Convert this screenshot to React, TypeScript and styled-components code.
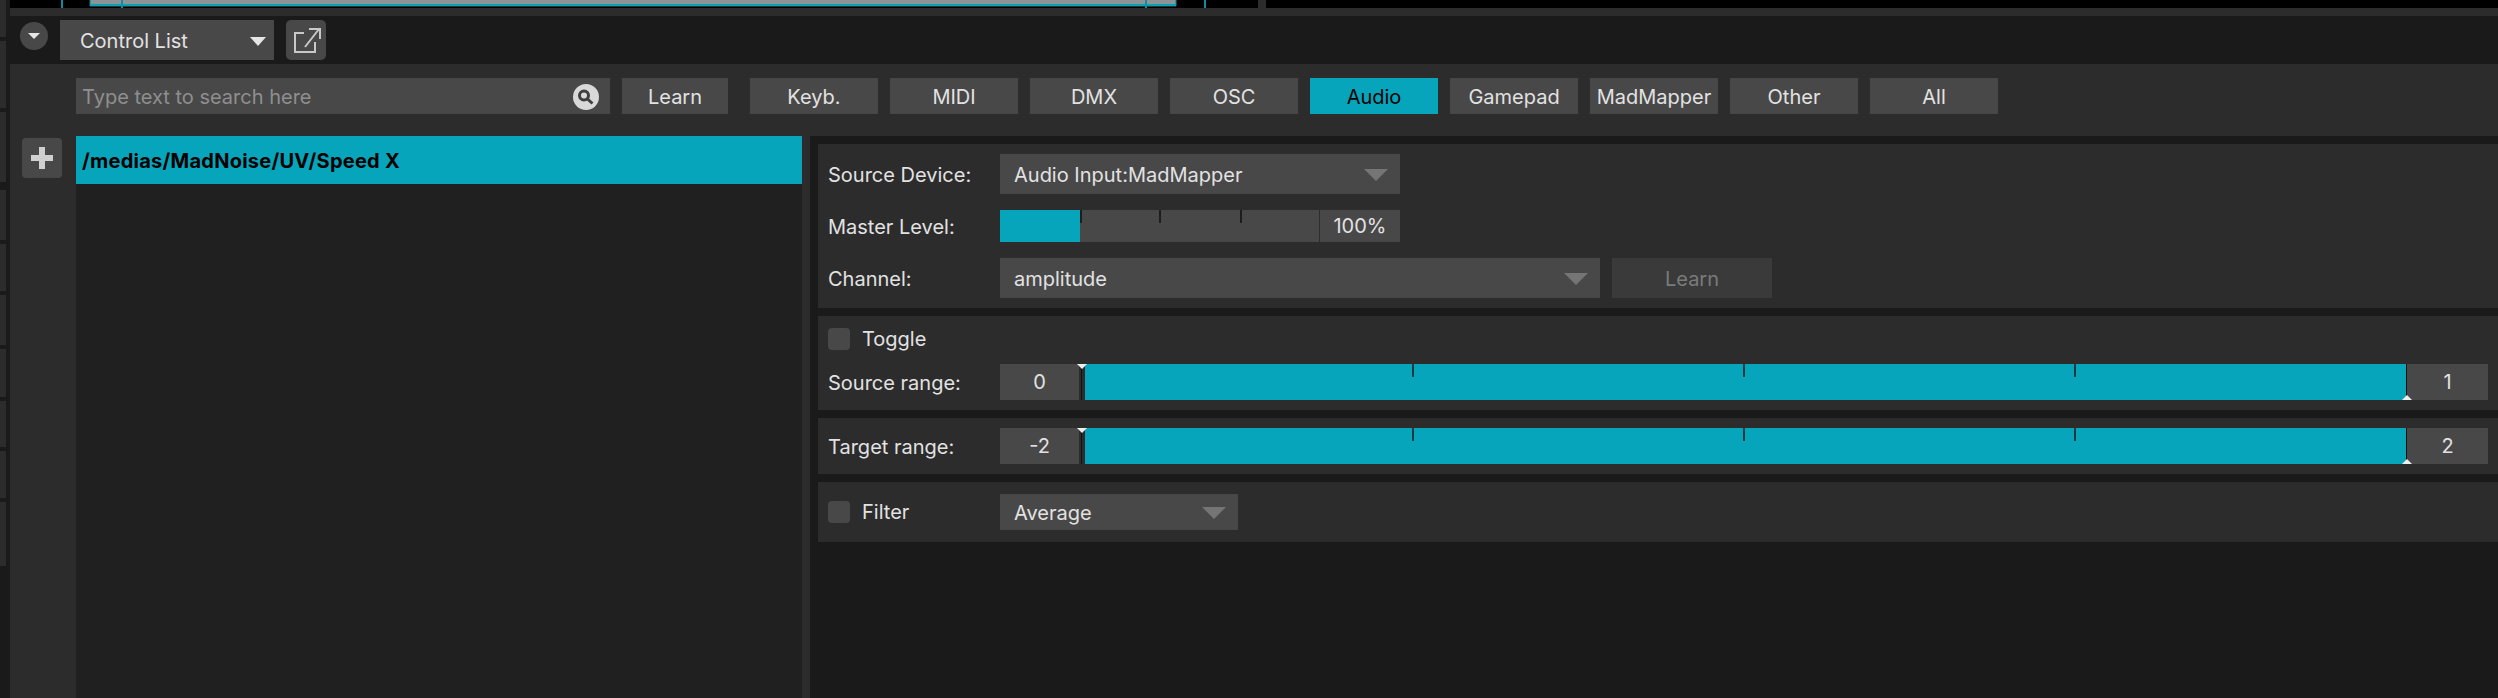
import React from 'react';
import styled, { createGlobalStyle } from 'styled-components';

const CYAN = '#07a5bc';
const PANEL = '#2c2c2c';
const DARK = '#1a1a1a';
const CONTROL = '#484848';
const TEXT = '#e2e2e2';

const GlobalStyle = createGlobalStyle`
  html, body {
    margin: 0;
    padding: 0;
    height: 100%;
    background: ${DARK};
    overflow: hidden;
  }
  #root {
    height: 100%;
  }
  * {
    box-sizing: border-box;
  }
`;

const Page = styled.div`
  display: flex;
  width: 2498px;
  height: 698px;
  font-family: Inter, 'Liberation Sans', sans-serif;
  font-size: 20px;
  color: ${TEXT};
  background: ${DARK};
`;

/* thin strip of the neighbouring panel, on the left edge */
const Rail = styled.div`
  width: 10px;
  flex-shrink: 0;
  display: flex;
  flex-direction: column;
  gap: 4px;
  padding-right: 4px;
`;

const RailCell = styled.div<{ $h: number; $gapAfter?: number }>`
  height: ${p => p.$h}px;
  margin-bottom: ${p => p.$gapAfter || 0}px;
  background: ${PANEL};
`;

const Main = styled.div`
  flex: 1;
  min-width: 0;
  display: flex;
  flex-direction: column;
`;

const Timeline = styled.div`
  position: relative;
  height: 8px;
  background: #000;
  overflow: hidden;
`;

const TimelineTick = styled.div<{ $x: number }>`
  position: absolute;
  top: 0;
  left: ${p => p.$x}px;
  width: 2px;
  height: 8px;
  background: #0b8ea3;
`;

const TimelineClip = styled.div`
  position: absolute;
  top: 0;
  left: 80px;
  width: 1086px;
  height: 6px;
  background: #8d9496;
  border: solid #0aa0b6;
  border-width: 0 1px 2px 1px;
  box-shadow: 0 1px 0 #24383c, 1px 0 0 #24383c, -1px 0 0 #24383c;
`;

const TimelineSplit = styled.div`
  position: absolute;
  top: 0;
  left: 1248px;
  width: 8px;
  height: 8px;
  background: ${PANEL};
`;

const Band = styled.div`
  height: 8px;
  background: ${PANEL};
`;

const Header = styled.div`
  height: 48px;
  display: flex;
  align-items: center;
  padding: 0 0 0 10px;
  background: ${DARK};
`;

const CollapseButton = styled.div`
  width: 28px;
  height: 28px;
  border-radius: 50%;
  background: ${CONTROL};
  display: flex;
  align-items: center;
  justify-content: center;
  margin-right: 12px;
  margin-top: -8px;
`;

const Arrow = styled.span<{ $w: number; $h: number; $color: string }>`
  display: block;
  flex-shrink: 0;
  width: 0;
  height: 0;
  border-left: ${p => p.$w / 2}px solid transparent;
  border-right: ${p => p.$w / 2}px solid transparent;
  border-top: ${p => p.$h}px solid ${p => p.$color};
`;

const Select = styled.div<{ $w: number; $h?: number; $pad?: number; $arrowRight?: number }>`
  width: ${p => p.$w}px;
  height: ${p => p.$h || 40}px;
  flex-shrink: 0;
  display: flex;
  align-items: center;
  justify-content: space-between;
  padding: 2px ${p => p.$arrowRight ?? 12}px 0 ${p => p.$pad ?? 14}px;
  background: ${CONTROL};
`;

const IconButton = styled.div`
  width: 40px;
  height: 40px;
  margin-left: 12px;
  border-radius: 5px;
  background: ${CONTROL};
  display: flex;
`;

const Body = styled.div`
  flex: 1;
  min-height: 0;
  display: flex;
  flex-direction: column;
  background: ${PANEL};
`;

const Toolbar = styled.div`
  height: 72px;
  flex-shrink: 0;
  display: flex;
  padding: 14px 0 0 66px;
`;

const Search = styled.div`
  width: 534px;
  height: 36px;
  display: flex;
  align-items: center;
  justify-content: space-between;
  padding: 2px 11px 0 6px;
  background: ${CONTROL};
  color: #8f8f8f;
`;

const SearchBadge = styled.div`
  width: 26px;
  height: 26px;
  border-radius: 50%;
  background: #d9d9d9;
  display: flex;
`;

const Button = styled.div<{ $active?: boolean; $w?: number }>`
  width: ${p => p.$w || 128}px;
  height: 36px;
  flex-shrink: 0;
  display: flex;
  align-items: center;
  justify-content: center;
  padding-top: 2px;
  background: ${p => (p.$active ? CYAN : CONTROL)};
  color: ${p => (p.$active ? '#000' : TEXT)};
`;

const LearnButton = styled(Button)`
  margin: 0 22px 0 12px;
`;

const Filters = styled.div`
  display: flex;
  gap: 12px;
`;

const Content = styled.div`
  flex: 1;
  min-height: 0;
  display: flex;
`;

const Gutter = styled.div`
  width: 66px;
  flex-shrink: 0;
  padding: 2px 0 0 12px;
`;

const AddButton = styled.div`
  width: 40px;
  height: 40px;
  border-radius: 4px;
  background: ${CONTROL};
  display: flex;
`;

const List = styled.div`
  width: 726px;
  flex-shrink: 0;
  background: #202020;
`;

const ListRow = styled.div`
  height: 48px;
  display: flex;
  align-items: center;
  padding: 2px 0 0 6px;
  background: ${CYAN};
  color: #000;
  font-weight: 700;
  letter-spacing: 0.25px;
`;

const Details = styled.div`
  flex: 1;
  min-width: 0;
  margin-left: 8px;
  padding: 8px 0 0 8px;
  display: flex;
  flex-direction: column;
  gap: 8px;
  background: ${DARK};
`;

const Section = styled.div<{ $h: number }>`
  height: ${p => p.$h}px;
  flex-shrink: 0;
  display: flex;
  flex-direction: column;
  padding: 0 10px;
  background: ${PANEL};
`;

const Row = styled.div<{ $top?: number }>`
  display: flex;
  align-items: center;
  margin-top: ${p => p.$top || 0}px;
`;

const Label = styled.div`
  width: 172px;
  flex-shrink: 0;
  padding-top: 2px;
`;

const MuteLearn = styled(Button)`
  width: 160px;
  height: 40px;
  margin-left: 12px;
  background: #3a3a3a;
  color: #7b7b7b;
`;

const Level = styled.div`
  position: relative;
  width: 400px;
  height: 32px;
  display: flex;
  background: ${CONTROL};
`;

const LevelFill = styled.div`
  width: 80px;
  background: ${CYAN};
`;

const LevelTick = styled.div<{ $x: number }>`
  position: absolute;
  top: 0;
  left: ${p => p.$x}px;
  width: 2px;
  height: 13px;
  background: #1d1d1d;
`;

const LevelValue = styled.div`
  margin-left: auto;
  width: 81px;
  display: flex;
  align-items: center;
  justify-content: center;
  border-left: 1px solid #2e2e2e;
`;

const Check = styled.div`
  width: 22px;
  height: 22px;
  flex-shrink: 0;
  margin-right: 12px;
  border-radius: 4px;
  background: ${CONTROL};
`;

const CheckLabel = styled.div`
  width: 138px;
  flex-shrink: 0;
`;

const RangeRow = styled.div`
  display: flex;
  height: 36px;
  width: 1488px;
`;

const ValueBox = styled.div<{ $w: number }>`
  width: ${p => p.$w}px;
  flex-shrink: 0;
  display: flex;
  align-items: center;
  justify-content: center;
  background: ${CONTROL};
`;

const Track = styled.div`
  position: relative;
  flex: 1;
  display: flex;
  padding: 0 1px 0 6px;
`;

const TrackFill = styled.div`
  flex: 1;
  background: ${CYAN};
`;

const TrackLine = styled.div<{ $end?: boolean }>`
  position: absolute;
  top: 0;
  bottom: 0;
  width: 1px;
  background: #111;
  ${p => (p.$end ? 'right: 0;' : 'left: 2px;')}
`;

const TrackTick = styled.div<{ $x: number }>`
  position: absolute;
  top: 0;
  left: ${p => p.$x}px;
  width: 2px;
  height: 13px;
  background: #1b3a40;
`;

const Handle = styled.div<{ $end?: boolean }>`
  position: absolute;
  width: 0;
  height: 0;
  border-left: 5px solid transparent;
  border-right: 5px solid transparent;
  ${p =>
    p.$end
      ? `right: -5px; bottom: 0; border-bottom: 5px solid #eee;`
      : `left: -2px; top: 0; border-top: 5px solid #eee;`}
`;

const Range = ({ low, high }: { low: string; high: string }) => (
  <RangeRow>
    <ValueBox $w={79}>{low}</ValueBox>
    <Track>
      <TrackFill />
      <TrackLine />
      <TrackLine $end />
      <TrackTick $x={333} />
      <TrackTick $x={664} />
      <TrackTick $x={995} />
      <Handle />
      <Handle $end />
    </Track>
    <ValueBox $w={81}>{high}</ValueBox>
  </RangeRow>
);

const filters = ['Keyb.', 'MIDI', 'DMX', 'OSC', 'Audio', 'Gamepad', 'MadMapper', 'Other', 'All'];

const railCells = [37, 67, 70, 50, 47, 50, 48, 46, 47, 64];

export default function App() {
  return (
    <Page>
      <GlobalStyle />
      <Rail>
        {railCells.map((h, i) => (
          <RailCell key={i} $h={h} $gapAfter={i === 2 ? 4 : 0} />
        ))}
      </Rail>
      <Main>
        <Timeline>
          <TimelineTick $x={51} />
          <TimelineClip />
          <TimelineTick $x={111} />
          <TimelineTick $x={1135} />
          <TimelineTick $x={1194} />
          <TimelineSplit />
        </Timeline>
        <Band />
        <Header>
          <CollapseButton>
            <Arrow $w={12} $h={6} $color="#e6e6e6" />
          </CollapseButton>
          <Select $w={214} $pad={20} $arrowRight={8}>
            Control List
            <Arrow $w={17} $h={9} $color="#e6e6e6" />
          </Select>
          <IconButton>
            <svg width="40" height="40" viewBox="0 0 40 40" fill="none" stroke="#c8c8c8" strokeWidth="2">
              <path d="M18 13H9V32H29V22" />
              <path d="M19 27L33 9M23 9H34V19" />
            </svg>
          </IconButton>
        </Header>
        <Body>
          <Toolbar>
            <Search>
              Type text to search here
              <SearchBadge>
                <svg width="26" height="26" viewBox="0 0 26 26" fill="none" stroke="#3f3f3f" strokeWidth="3">
                  <circle cx="11" cy="11.5" r="4.5" />
                  <path d="M14.5 15L19.5 19.5" />
                </svg>
              </SearchBadge>
            </Search>
            <LearnButton $w={106}>Learn</LearnButton>
            <Filters>
              {filters.map(name => (
                <Button key={name} $active={name === 'Audio'}>
                  {name}
                </Button>
              ))}
            </Filters>
          </Toolbar>
          <Content>
            <Gutter>
              <AddButton>
                <svg width="40" height="40" viewBox="0 0 40 40" fill="#cfcfcf">
                  <rect x="9" y="17" width="22" height="6" />
                  <rect x="17" y="9" width="6" height="22" />
                </svg>
              </AddButton>
            </Gutter>
            <List>
              <ListRow>/medias/MadNoise/UV/Speed X</ListRow>
            </List>
            <Details>
              <Section $h={164}>
                <Row $top={10}>
                  <Label>Source Device:</Label>
                  <Select $w={400}>
                    Audio Input:MadMapper
                    <Arrow $w={24} $h={12} $color="#757575" />
                  </Select>
                </Row>
                <Row $top={16}>
                  <Label>Master Level:</Label>
                  <Level>
                    <LevelFill />
                    <LevelTick $x={80} />
                    <LevelTick $x={159} />
                    <LevelTick $x={240} />
                    <LevelValue>100%</LevelValue>
                  </Level>
                </Row>
                <Row $top={16}>
                  <Label>Channel:</Label>
                  <Select $w={600}>
                    amplitude
                    <Arrow $w={24} $h={12} $color="#757575" />
                  </Select>
                  <MuteLearn>Learn</MuteLearn>
                </Row>
              </Section>
              <Section $h={94}>
                <Row $top={11}>
                  <Check />
                  <CheckLabel>Toggle</CheckLabel>
                </Row>
                <Row $top={13}>
                  <Label>Source range:</Label>
                  <Range low="0" high="1" />
                </Row>
              </Section>
              <Section $h={56}>
                <Row $top={10}>
                  <Label>Target range:</Label>
                  <Range low="-2" high="2" />
                </Row>
              </Section>
              <Section $h={60}>
                <Row $top={12}>
                  <Check />
                  <CheckLabel>Filter</CheckLabel>
                  <Select $w={238} $h={36} $arrowRight={12}>
                    Average
                    <Arrow $w={24} $h={12} $color="#757575" />
                  </Select>
                </Row>
              </Section>
            </Details>
          </Content>
        </Body>
      </Main>
    </Page>
  );
}
